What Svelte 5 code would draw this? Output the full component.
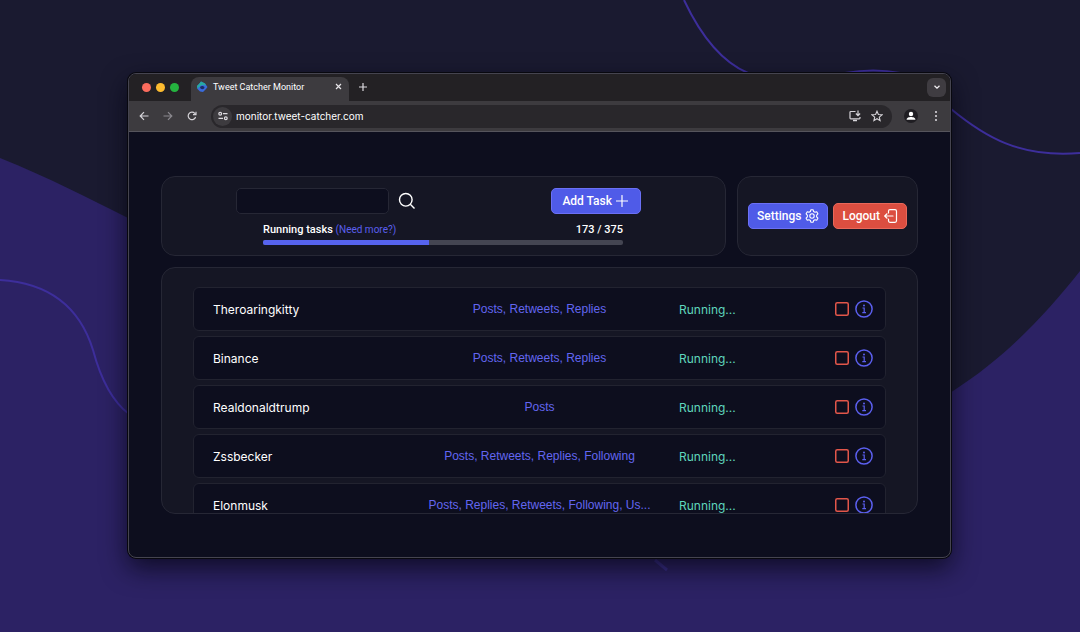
<script lang="ts">
  interface Task {
    name: string;
    targets: string;
  }

  const tasks: Task[] = [
    { name: "Theroaringkitty", targets: "Posts, Retweets, Replies" },
    { name: "Binance", targets: "Posts, Retweets, Replies" },
    { name: "Realdonaldtrump", targets: "Posts" },
    { name: "Zssbecker", targets: "Posts, Retweets, Replies, Following" },
    { name: "Elonmusk", targets: "Posts, Replies, Retweets, Following, Us..." },
  ];

  const used = 173;
  const limit = 375;

  let search = $state("");
</script>

<div class="desktop">
  <svg class="backdrop" viewBox="0 0 1080 632" preserveAspectRatio="none" aria-hidden="true">
    <path d="M0 158 C50 178 90 199 128 218 C300 320 420 470 560 480 C720 480 850 450 953 391 C1005 358 1045 315 1080 271 V632 H0Z" fill="#2c2264" />
    <g fill="none" stroke="#3d2e9b" stroke-width="2">
      <path d="M0 280 C50 283 80 308 93 350 C101 380 113 402 129 414" />
      <path d="M684 0 C700 34 722 62 748 73" />
      <path d="M845 73 Q874 68 900 73" />
      <path d="M951 109 C985 137 1020 158 1080 153" />
      <path d="M655 560 L667 570" stroke="#3b2f8c" stroke-width="3" />
    </g>
  </svg>

  <div class="window">
    <div class="tab-strip">
      <span class="light red"></span>
      <span class="light yellow"></span>
      <span class="light green"></span>
      <div class="tab">
        <svg class="favicon" viewBox="0 0 12 12" aria-hidden="true">
          <path d="M1 5 L3 3 L5 0.500 L9 2.500 L11.500 6 L10 8 L7 11 L4 10.500 L1.500 8Z" fill="#3a6bdc" />
          <path d="M1 5 L3 3 L5 0.500 L9 2.500 L10 4.500 L6 4 L3 6 L1.500 8Z" fill="#27aaa0" />
          <path d="M4 6 C5 4.500 8 4.500 8.500 6.500 C8 8.500 6 8.500 4.500 7.500Z" fill="#1c2c66" />
        </svg>
        <span class="tab-title">Tweet Catcher Monitor</span>
        <button class="icon-btn" aria-label="Close tab">
          <svg width="7" height="7" viewBox="0 0 7 7"><path d="M1 1 L6 6 M6 1 L1 6" stroke="#e6e4e8" stroke-width="1.2" /></svg>
        </button>
      </div>
      <button class="icon-btn new-tab" aria-label="New tab">
        <svg width="8" height="8" viewBox="0 0 8 8"><path d="M4 0 V8 M0 4 H8" stroke="#dddbe0" stroke-width="1.2" /></svg>
      </button>
      <button class="icon-btn tab-search" aria-label="Search tabs">
        <svg width="8" height="8" viewBox="0 0 8 8"><path d="M1.500 2.700 L4 5.200 L6.500 2.700" fill="none" stroke="#f0eef2" stroke-width="1.300" /></svg>
      </button>
    </div>

    <div class="toolbar">
      <div class="nav">
        <button class="icon-btn" aria-label="Back">
          <svg width="10" height="10" viewBox="0 0 10 10" fill="none" stroke="#d6d4d9" stroke-width="1.2"><path d="M9.500 5 H1.200 M5 1.200 L1.200 5 L5 8.800" /></svg>
        </button>
        <button class="icon-btn" aria-label="Forward">
          <svg width="10" height="10" viewBox="0 0 10 10" fill="none" stroke="#8b898f" stroke-width="1.2"><path d="M0.500 5 H8.800 M5 1.200 L8.800 5 L5 8.800" /></svg>
        </button>
        <button class="icon-btn" aria-label="Reload">
          <svg width="10" height="10" viewBox="0 0 10 10" fill="none" stroke="#d6d4d9" stroke-width="1.2"><path d="M8.600 6 A3.800 3.800 0 1 1 7.800 2.300 L8.700 3.300" /><path d="M9 0.700 V3.700 H6" /></svg>
        </button>
      </div>
      <div class="address">
        <button class="site-info" aria-label="Site information">
          <svg width="10" height="10" viewBox="0 0 10 10" fill="none" stroke="#dddbe0" stroke-width="1.2"><circle cx="2.200" cy="2.700" r="1.400" /><path d="M5 2.700 H9.500 M0.500 7.300 H5" /><circle cx="7.800" cy="7.300" r="1.400" /></svg>
        </button>
        <span class="url">monitor.tweet-catcher.com</span>
        <button class="icon-btn" aria-label="Install app">
          <svg width="12" height="12" viewBox="0 0 12 12" fill="none" stroke="#d6d4d9" stroke-width="1.200"><path d="M6.500 1.500 H1.800 Q1 1.500 1 2.300 V8 Q1 8.800 1.800 8.800 H10.200 Q11 8.800 11 8 V7" /><path d="M4 10.500 H8" stroke-width="1.600" /><path d="M9 0.500 V5.500 M6.900 3.500 L9 5.600 L11.100 3.500" /></svg>
        </button>
        <button class="icon-btn" aria-label="Bookmark this page">
          <svg width="12" height="12" viewBox="0 0 12 12"><path d="M6 1.200 L7.400 4.500 L11 4.800 L8.300 7.100 L9.100 10.600 L6 8.700 L2.900 10.600 L3.700 7.100 L1 4.800 L4.600 4.500Z" fill="none" stroke="#d6d4d9" stroke-width="1.100" /></svg>
        </button>
      </div>
      <button class="icon-btn" aria-label="Profile">
        <svg width="14" height="14" viewBox="0 0 14 14"><circle cx="7" cy="7" r="7" fill="#1f1d22" /><circle cx="7" cy="5" r="2.200" fill="#fff" /><path d="M2.600 10.800 C2.600 8.600 5 8 7 8 S11.400 8.600 11.400 10.800Z" fill="#fff" /></svg>
      </button>
      <button class="icon-btn" aria-label="Menu">
        <svg width="12" height="12" viewBox="0 0 12 12" fill="#d6d4d9"><circle cx="6" cy="2" r="1.100" /><circle cx="6" cy="6" r="1.100" /><circle cx="6" cy="10" r="1.100" /></svg>
      </button>
    </div>

    <main class="page">
      <div class="top">
        <section class="panel controls">
          <form class="search-row" onsubmit={(e) => e.preventDefault()}>
            <input type="text" aria-label="Search tasks" bind:value={search} />
            <button class="icon-btn search-btn" aria-label="Search">
              <svg width="18" height="18" viewBox="0 0 18 18" fill="none" stroke="#fff" stroke-width="1.400"><circle cx="7.800" cy="7.800" r="6.300" /><path d="M12.300 12.300 L16.500 16.500" /></svg>
            </button>
            <button type="button" class="btn add">
              Add Task
              <svg width="12" height="12" viewBox="0 0 12 12"><path d="M6 0.500 V11.500 M0.500 6 H11.500" stroke="#fff" stroke-width="1.200" stroke-linecap="round" /></svg>
            </button>
          </form>
          <div class="usage">
            <div class="usage-text">
              <span>Running tasks <a href="#plans">(Need more?)</a></span>
              <span>{used} / {limit}</span>
            </div>
            <div class="bar">
              <div class="bar-fill" style="width: {(used / limit) * 100}%"></div>
            </div>
          </div>
        </section>

        <section class="panel account">
          <button class="btn">
            Settings
            <svg width="14" height="14" viewBox="0 0 24 24" fill="none" stroke="#fff" stroke-width="1.900" stroke-linejoin="round">
              <path d="M9.300 4.200 L10 1.300 H14 L14.700 4.200 L17.200 5.600 L20.100 4.800 L22.100 8.300 L20 10.400 V13.600 L22.100 15.700 L20.100 19.200 L17.200 18.400 L14.700 19.800 L14 22.700 H10 L9.300 19.800 L6.800 18.400 L3.900 19.200 L1.900 15.700 L4 13.600 V10.400 L1.900 8.300 L3.900 4.800 L6.800 5.600Z" />
              <circle cx="12" cy="12" r="3.800" />
            </svg>
          </button>
          <button class="btn danger">
            Logout
            <svg width="14" height="14" viewBox="0 0 14 14" fill="none" stroke="#fff" stroke-width="1.200" stroke-linecap="round" stroke-linejoin="round"><path d="M4.500 4 V2.200 Q4.500 0.700 6 0.700 H11 Q12.500 0.700 12.500 2.200 V11.800 Q12.500 13.300 11 13.300 H6 Q4.500 13.300 4.500 11.800 V10" /><path d="M9 7 H0.700 M3 4.800 L0.700 7 L3 9.200" /></svg>
          </button>
        </section>
      </div>

      <section class="panel list">
        {#each tasks as task (task.name)}
          <div class="task">
            <span class="name">{task.name}</span>
            <span class="targets">{task.targets}</span>
            <div class="state">
              <span class="running">Running...</span>
              <button class="icon-btn" aria-label="Stop {task.name}">
                <svg width="14" height="14" viewBox="0 0 14 14"><rect x="0.750" y="0.750" width="12.500" height="12.500" rx="1.500" fill="none" stroke="#e2564a" stroke-width="1.500" /></svg>
              </button>
              <button class="icon-btn info" aria-label="About {task.name}">
                <svg width="18" height="18" viewBox="0 0 18 18" fill="none" stroke="#5b5fee"><circle cx="9" cy="9" r="8.100" stroke-width="1.500" /><circle cx="9" cy="5.600" r="1" fill="#5b5fee" stroke="none" /><path d="M7.500 8 H9.200 V12.600 M7.300 12.600 H11" stroke-width="1.200" /></svg>
              </button>
            </div>
          </div>
        {/each}
      </section>
    </main>
  </div>
</div>

<style>
  :global(body) {
    margin: 0;
    background: #2c2264;
  }

  .desktop {
    position: relative;
    min-height: 100vh;
    box-sizing: border-box;
    padding: 73px 129px 74px 128px;
    overflow: hidden;
    background: #1a1a30;
    font-family: Roboto, "Liberation Sans", sans-serif;
    font-size: 12px;
    color: #fff;
  }

  .backdrop {
    position: absolute;
    inset: 0;
    width: 100%;
    height: 100%;
  }

  .window {
    position: relative;
    border: 1px solid #45444f;
    border-radius: 8px;
    overflow: hidden;
    background: #0d0e1e;
    box-shadow: 0 0 0 1px #08080f, 0 10px 26px rgba(6, 5, 18, 0.75);
  }

  .window svg {
    display: block;
  }

  button {
    font: inherit;
    color: inherit;
    cursor: pointer;
  }

  .icon-btn {
    display: flex;
    align-items: center;
    justify-content: center;
    padding: 0;
    border: none;
    background: none;
  }

  .tab-strip {
    display: flex;
    align-items: center;
    height: 27px;
    box-sizing: border-box;
    padding: 0 4px 1px 13px;
    background: #232124;
  }

  .light {
    width: 9px;
    height: 9px;
    margin-right: 5px;
    border-radius: 50%;
  }

  .red {
    background: #fb6c5d;
  }

  .yellow {
    background: #fcbb2f;
  }

  .green {
    background: #25b33f;
  }

  .tab {
    display: flex;
    align-items: center;
    gap: 5px;
    width: 158px;
    height: 24px;
    box-sizing: border-box;
    margin: 3px 0 0 7px;
    padding: 0 7px 4px 5px;
    border-radius: 8px 8px 0 0;
    background: #3d3b3f;
    font-size: 9px;
  }

  .favicon {
    width: 12px;
    height: 12px;
  }

  .tab-title {
    flex: 1;
    white-space: nowrap;
  }

  .new-tab {
    margin-left: 10px;
  }

  .tab-search {
    width: 19px;
    height: 19px;
    margin-left: auto;
    border-radius: 6px;
    background: #3f3c41;
  }

  .toolbar {
    display: flex;
    align-items: center;
    gap: 12px;
    height: 30px;
    padding: 0 8px 0 10px;
    border-bottom: 1px solid #55545c;
    background: #3d3b3f;
  }

  .nav {
    display: flex;
    gap: 14px;
    margin-right: 2px;
  }

  .address {
    display: flex;
    flex: 1;
    align-items: center;
    gap: 10px;
    height: 23px;
    padding: 0 9px 0 2px;
    border-radius: 12px;
    background: #29272b;
  }

  .site-info {
    display: flex;
    align-items: center;
    justify-content: center;
    width: 19px;
    height: 19px;
    margin-right: -6px;
    padding: 0;
    border: none;
    border-radius: 50%;
    background: #3d3b3f;
  }

  .url {
    flex: 1;
    font-family: Inter, sans-serif;
    font-size: 10px;
  }

  .page {
    padding: 44px 32px 43px;
  }

  .top {
    display: flex;
    gap: 11px;
    margin-bottom: 11px;
  }

  .panel {
    box-sizing: border-box;
    border: 1px solid #262735;
    border-radius: 14px;
    background: #151624;
  }

  .controls {
    flex: 1;
    padding: 11px 84px 10px 74px;
  }

  .search-row {
    display: flex;
    align-items: center;
  }

  input {
    width: 153px;
    height: 26px;
    box-sizing: border-box;
    padding: 0 8px;
    border: 1px solid #262735;
    border-radius: 5px;
    background: #0d0e1e;
    color: #fff;
    font: inherit;
  }

  .search-btn {
    margin-left: 9px;
  }

  .btn {
    display: flex;
    align-items: center;
    gap: 4px;
    height: 26px;
    padding: 0 8px;
    border: 1px solid #6b70f5;
    border-radius: 5px;
    background: #4f5be8;
    font-weight: 500;
  }

  .add {
    margin-left: auto;
    padding: 0 12px 0 10px;
  }

  .danger {
    border-color: #e9685a;
    background: #dc4e40;
  }

  .usage {
    margin: 8px 18px 0 27px;
  }

  .usage-text {
    display: flex;
    justify-content: space-between;
    font-size: 11px;
    font-weight: 500;
    line-height: 16px;
  }

  .usage a {
    color: #5b5fee;
    font-size: 10px;
    font-weight: 400;
    text-decoration: none;
  }

  .bar {
    height: 5px;
    margin-top: 2px;
    border-radius: 2px;
    overflow: hidden;
    background: #444552;
  }

  .bar-fill {
    height: 100%;
    background: #5663ee;
  }

  .account {
    display: flex;
    align-items: center;
    justify-content: center;
    gap: 5px;
    padding: 0 10px;
  }

  .list {
    display: flex;
    flex-direction: column;
    gap: 5px;
    max-height: 247px;
    padding: 19px 31px 0;
    overflow: hidden;
    font-family: Inter, "Liberation Sans", sans-serif;
  }

  .task {
    display: grid;
    grid-template-columns: minmax(0, 215fr) minmax(0, 223fr) minmax(0, 222fr);
    flex: none;
    align-items: center;
    height: 44px;
    box-sizing: border-box;
    padding: 0 12px 0 19px;
    border: 1px solid #222330;
    border-radius: 6px;
    background: #0d0e1e;
  }

  .targets {
    color: #6366f1;
    font-family: "Liberation Sans", Arial, sans-serif;
    text-align: center;
    white-space: nowrap;
  }

  .state {
    display: flex;
    align-items: center;
    padding-left: 28px;
  }

  .running {
    flex: 1;
    color: #5fd6bd;
  }

  .info {
    margin-left: 6px;
  }
</style>
